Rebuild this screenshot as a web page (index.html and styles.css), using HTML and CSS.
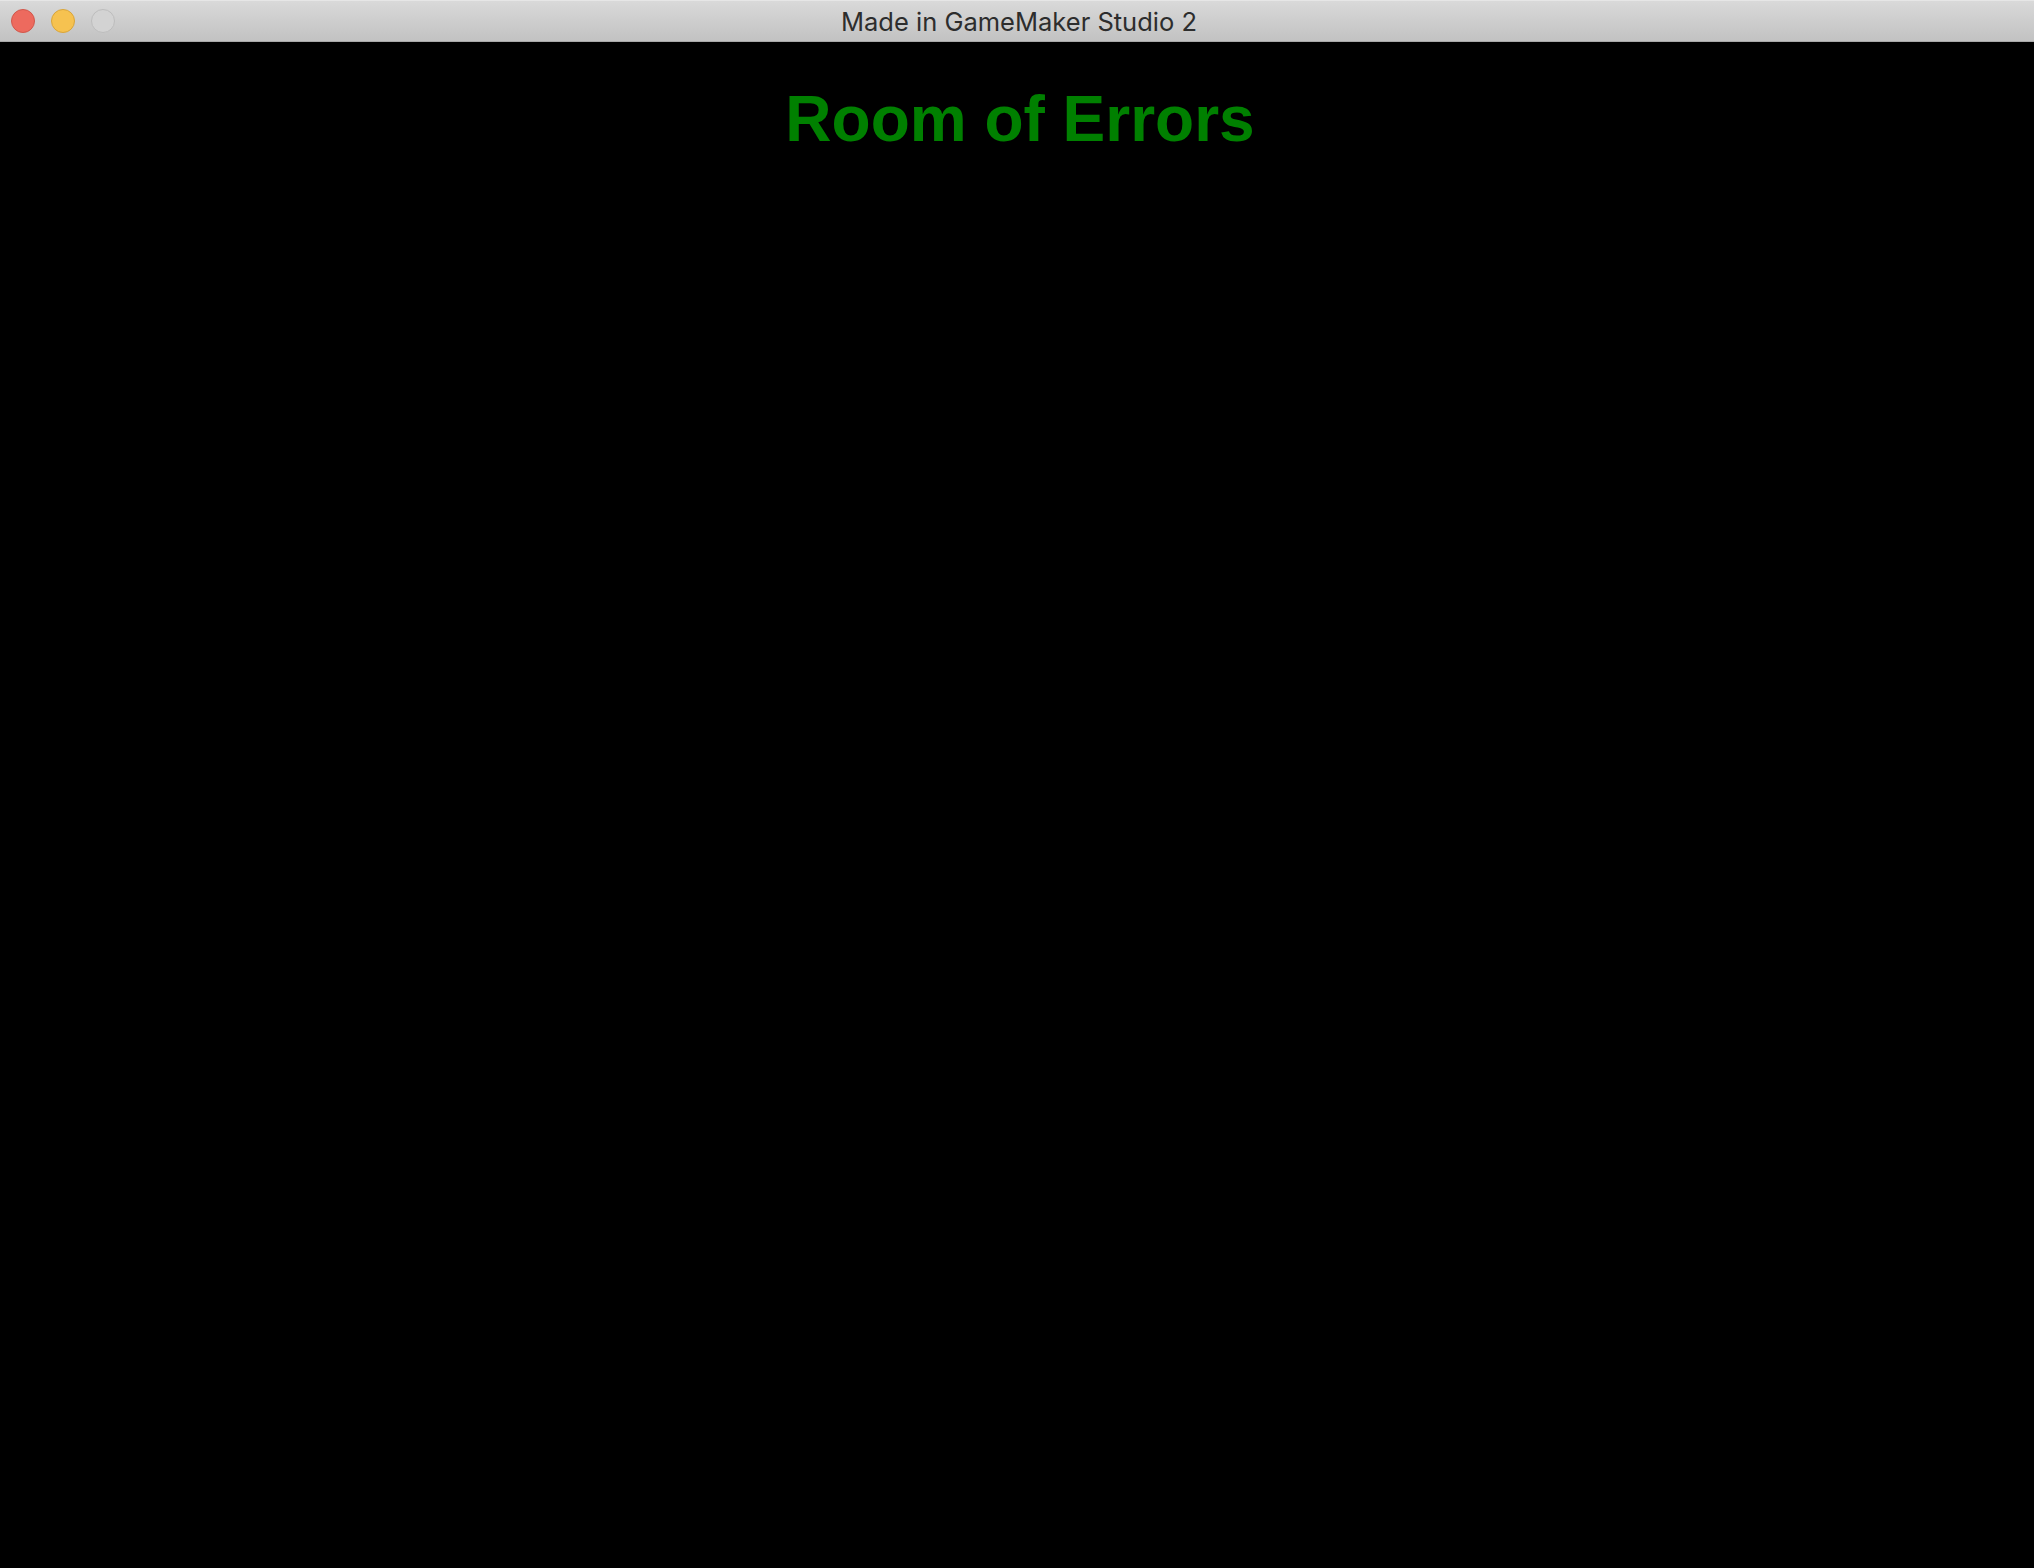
FILE: index.html
```html
<!DOCTYPE html>
<html>
<head>
<meta charset="utf-8">
<link rel="stylesheet" href="styles.css">
</head>
<body>
<div class="window">
  <div class="titlebar">
    <div class="lights">
      <span class="light close"></span>
      <span class="light min"></span>
      <span class="light max"></span>
    </div>
    <div class="title">Made in GameMaker Studio 2</div>
  </div>
  <div class="room">
    <h1 class="heading">Room of Errors</h1>
  </div>
</div>
</body>
</html>
```

FILE: styles.css
```css
html, body {
  margin: 0;
  padding: 0;
  background: #000;
  width: 2034px;
  height: 1568px;
  overflow: hidden;
}
.window {
  display: flex;
  flex-direction: column;
  height: 1568px;
}
.titlebar {
  position: relative;
  height: 41px;
  border-top: 1px solid #e6e6e6;
  border-bottom: 1px solid #a9a9a9;
  box-sizing: border-box;
  height: 42px;
  background: linear-gradient(#d9d9d9, #c2c2c2);
  display: flex;
  align-items: center;
  justify-content: center;
  flex-shrink: 0;
}
.lights {
  position: absolute;
  left: 11px;
  top: 8px;
  display: flex;
  gap: 16px;
}
.light {
  width: 24px;
  height: 24px;
  border-radius: 50%;
  box-sizing: border-box;
}
.close { background: #ed6a5e; border: 1px solid #d1574b; }
.min { background: #f6c250; border: 1px solid #d9a53a; }
.max { background: #d3d3d3; border: 1px solid #bdbdbd; }
.title {
  font-family: Inter, "Liberation Sans", sans-serif;
  font-size: 25.5px;
  color: #2d2d2d;
  line-height: 1;
  margin-top: 2px;
  padding-left: 4px;
}
.room {
  flex: 1;
  background: #000;
  display: flex;
  justify-content: center;
}
.heading {
  margin: 45px 0 0 0;
  font-family: "Liberation Sans", Arial, sans-serif;
  font-weight: bold;
  font-size: 64px;
  line-height: 64px;
  color: #008000;
  padding-left: 6px;
}
```
